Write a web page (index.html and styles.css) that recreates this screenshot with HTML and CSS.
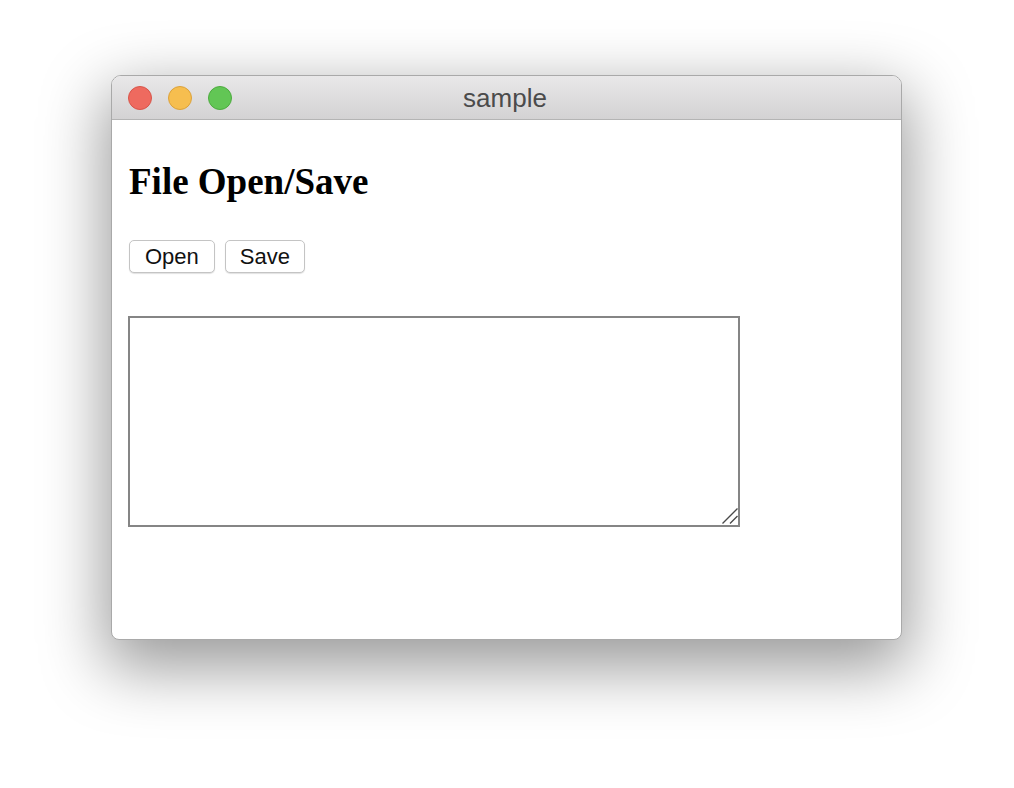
FILE: index.html
```html
<!DOCTYPE html>
<html>
<head>
<meta charset="utf-8">
<title>sample</title>
<link rel="stylesheet" href="styles.css">
</head>
<body>
<div class="desktop">
  <div class="window">
    <div class="titlebar">
      <div class="lights">
        <span class="light red"></span>
        <span class="light yellow"></span>
        <span class="light green"></span>
      </div>
      <div class="title">sample</div>
    </div>
    <div class="content">
      <h1 class="heading">File Open/Save</h1>
      <div class="buttons">
        <button class="btn">Open</button>
        <button class="btn btn-save">Save</button>
      </div>
      <div class="editor-wrap">
        <textarea class="editor"></textarea>
        <svg class="grip" width="16" height="16" viewBox="0 0 16 16">
          <path d="M0.5 15.5 L15.5 0.5 M8 15.5 L15.5 8" stroke="#4a4a4a" stroke-width="1.4" fill="none"/>
        </svg>
      </div>
    </div>
  </div>
</div>
</body>
</html>
```
FILE: styles.css
```css
html, body {
  margin: 0;
  padding: 0;
  background: #ffffff;
}
.desktop {
  padding: 75px 0 0 111px;
  height: 788px;
  box-sizing: border-box;
}
.window {
  width: 791px;
  height: 565px;
  box-sizing: border-box;
  border-radius: 10px 10px 8px 8px;
  background: #ffffff;
  border: 1px solid #a9a9a9;
  box-shadow: 0 22px 64px 6px rgba(0,0,0,0.4);
  overflow: hidden;
  display: flex;
  flex-direction: column;
}
.titlebar {
  height: 44px;
  flex: 0 0 44px;
  box-sizing: border-box;
  background: linear-gradient(#e9e8e9, #d3d2d3);
  border-bottom: 1px solid #b4b4b4;
  position: relative;
  display: flex;
  align-items: center;
  justify-content: center;
}
.lights {
  position: absolute;
  left: 16px;
  top: 10px;
  display: flex;
  gap: 16px;
}
.light {
  width: 24px;
  height: 24px;
  box-sizing: border-box;
  border-radius: 50%;
  display: block;
}
.red { background: #ee6a5f; border: 1px solid #d8554a; }
.yellow { background: #f6be4f; border: 1px solid #dca23b; }
.green { background: #62c655; border: 1px solid #4dab3f; }
.title {
  font-family: "Liberation Sans", Arial, sans-serif;
  font-size: 26px;
  color: #4b4b4b;
  margin-left: -3px;
  margin-top: 1px;
}
.content {
  padding: 0 16px;
  display: flex;
  flex-direction: column;
  align-items: flex-start;
}
.heading {
  font-family: "Liberation Serif", "Times New Roman", serif;
  font-weight: bold;
  font-size: 37px;
  line-height: 37px;
  margin: 43px 0 0 1px;
  color: #000;
}
.buttons {
  display: flex;
  gap: 10px;
  margin: 40px 0 0 1px;
}
.btn {
  font-family: "Liberation Sans", Arial, sans-serif;
  font-size: 22px;
  color: #111;
  height: 33px;
  padding: 0 15px;
  background: #ffffff;
  border: 1px solid #c4c4c4;
  border-radius: 5px;
  box-shadow: 0 1px 1px rgba(0,0,0,0.12);
}
.btn-save {
  padding: 0 14px;
}
.editor-wrap {
  position: relative;
  margin-top: 43px;
  width: 612px;
  height: 211px;
}
.editor {
  display: block;
  width: 612px;
  height: 211px;
  box-sizing: border-box;
  border: 2px solid #858585;
  background: #fff;
  padding: 2px;
  resize: none;
  font-family: "Liberation Mono", monospace;
  font-size: 13px;
}
.grip {
  position: absolute;
  right: 2px;
  bottom: 3px;
}
```
